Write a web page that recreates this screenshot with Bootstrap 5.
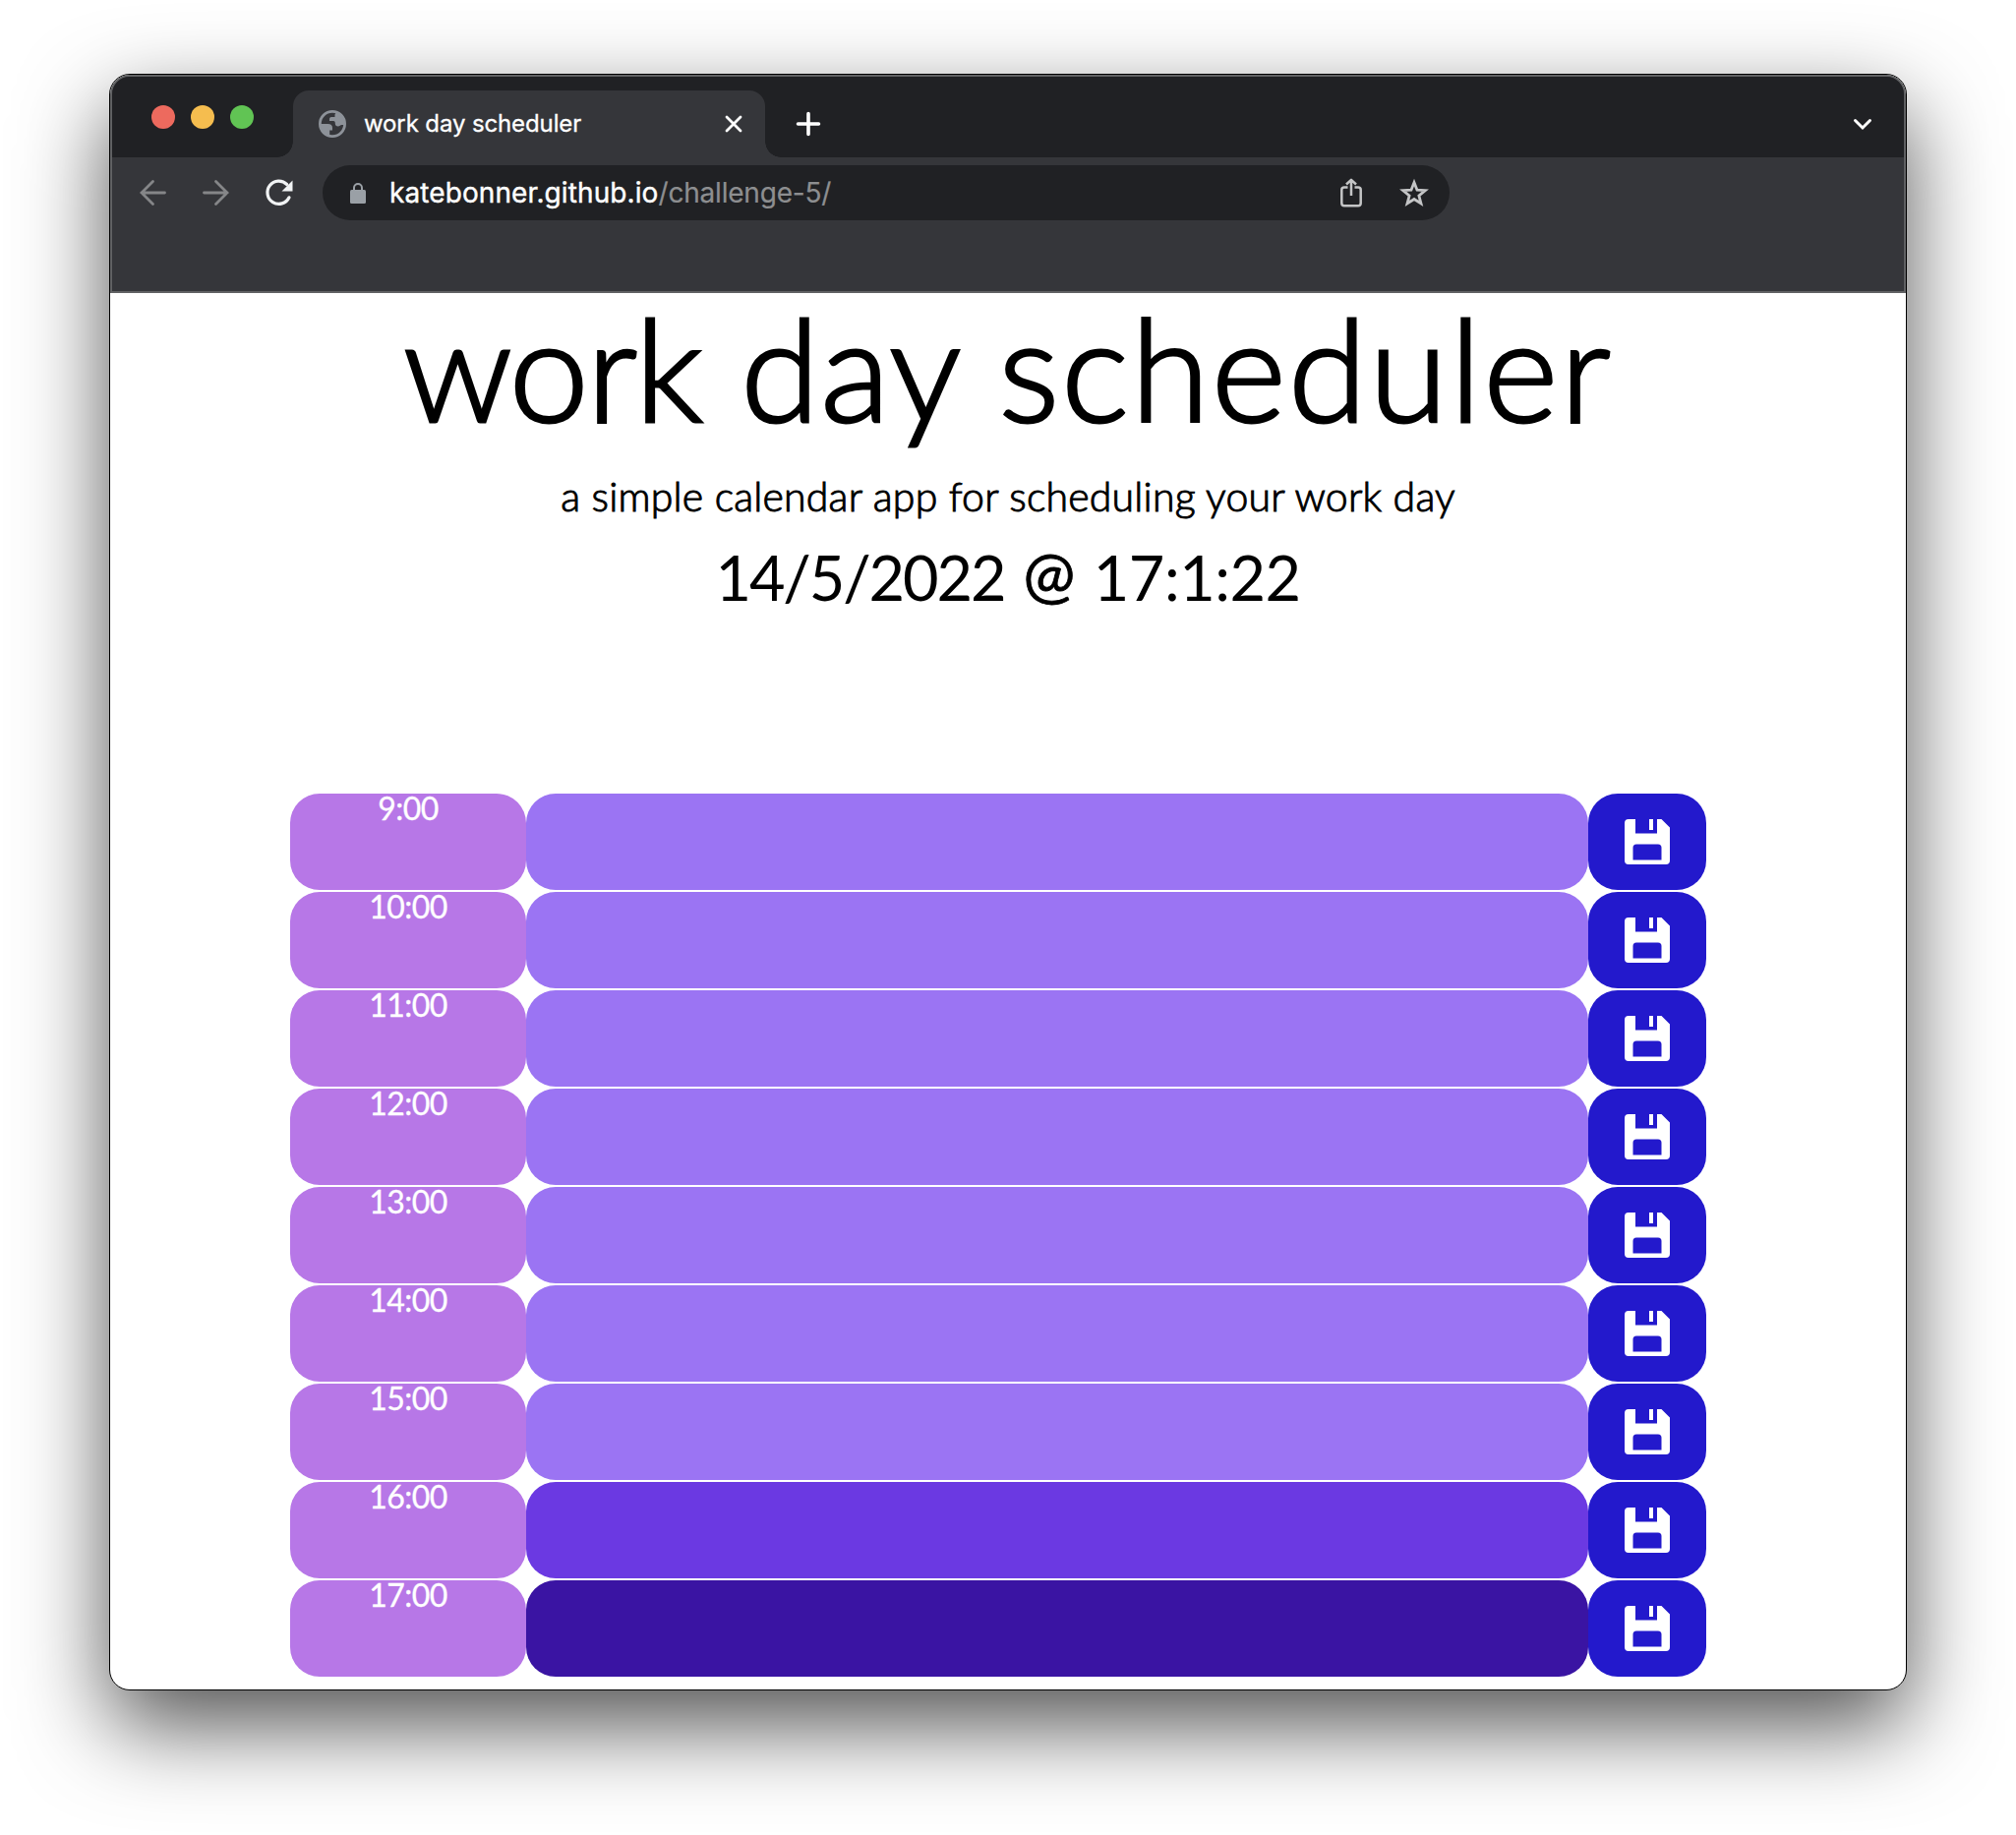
<!DOCTYPE html>
<html lang="en">
<head>
<meta charset="utf-8">
<meta name="viewport" content="width=device-width, initial-scale=1">
<title>work day scheduler</title>
<link href="https://cdn.jsdelivr.net/npm/bootstrap@5.3.0/dist/css/bootstrap.min.css" rel="stylesheet">
<style>
  body { background: #fff; font-family: Lato, "Open Sans", sans-serif; color: #000; }
  .desktop { width: 2050px; height: 1866px; padding: 75px 111px 0; }
  .browser { width: 1828px; height: 1644px; border: 1px solid #000; border-radius: 21px; background: #fff;
    box-shadow: 0 36px 90px rgba(0,0,0,.68); }
  .chrome { border: 2px solid #606163; border-radius: 20px 20px 0 0; background: #35363a; height: 222px;
    font-family: Inter, "Liberation Sans", sans-serif; }
  .tabstrip { height: 82px; background: #202124; border-radius: 18px 18px 0 0; padding-left: 40px; }
  .lights { gap: 16px; margin-top: -1px; height: 84px; }
  .light { width: 24px; height: 24px; border-radius: 50%; }
  .light-r { background: #ed6a5e; } .light-y { background: #f5bd4f; } .light-g { background: #61c454; }
  .page-tab { width: 480px; height: 68px; margin-left: 40px; background: #35363a; border-radius: 16px 16px 0 0;
    padding: 0 24px 0 26px; color: #fff; font-size: 24px; font-weight: 400; position: relative; }
  .page-tab::before, .page-tab::after { content: ""; position: absolute; bottom: 0; width: 16px; height: 16px; }
  .page-tab::before { left: -16px; background: radial-gradient(circle at 0 0, #202124 15.5px, #35363a 16px); }
  .page-tab::after { right: -16px; background: radial-gradient(circle at 100% 0, #202124 15.5px, #35363a 16px); }
  .tab-title { margin-left: 18px; letter-spacing: -.12px; -webkit-text-stroke: .3px #fff; }
  .tab-actions { height: 68px; padding: 0 33px 0 32px; }
  .toolbar { height: 56px; margin-top: 8px; padding-left: 28px; }
  .nav-icon { margin-left: 37px; }
  .pill { width: 1146px; height: 56px; border-radius: 28px; background: #202124; margin-left: 30px; padding: 0 21px 0 28px; }
  .url { margin-left: 24px; font-size: 28px; font-weight: 400; color: #fff; letter-spacing: .1px; -webkit-text-stroke: .4px #fff; }
  .url span { color: #8d8e90; -webkit-text-stroke: .2px #8d8e90; letter-spacing: -.2px; }
  .star { margin-left: 38px; }
  svg { display: block; flex: none; overflow: visible; }
  .title-line { font-size: 145px; line-height: 150px; font-weight: 300; letter-spacing: 1.2px; margin: 0; -webkit-text-stroke: 3px #000; }
  .word-tight { letter-spacing: -2.1px; } .word-wide { letter-spacing: 2.3px; }
  .sub-line { font-size: 41px; line-height: 52px; font-weight: 300; letter-spacing: .2px; margin: 31px 0 0; -webkit-text-stroke: 1px #000; }
  .date-line { font-size: 63px; line-height: 80px; font-weight: 400; letter-spacing: -.5px; word-spacing: 3.5px; margin: 16px 0 0; }
  .date-part { letter-spacing: -2.1px; }
  .at-sign { position: relative; top: -4px; -webkit-text-stroke: .8px #000; }
  .nowrap { white-space: nowrap; }
  .planner { width: 1440px; margin: 179px 0 0 183px; }
  .slot { height: 100px; padding: 1px 0; }
  .slot > div { border-radius: 30px; }
  .hour { background: #b777e7; color: #fff; font-size: 32px; line-height: 29px; letter-spacing: -.5px; -webkit-text-stroke: .3px #fff; }
  .past { background: #9b74f3; } .present { background: #6b39e2; } .future { background: #3a14a3; }
  .save { background: #2319cc; }
</style>
</head>
<body>
<svg width="0" height="0" class="position-absolute">
  <symbol id="floppy" viewBox="0 0 46 46">
    <path fill="#fff" fill-rule="evenodd" d="M4 0H11V14.500H33V0H37.500L46 8.500V42Q46 46 42 46H4Q0 46 0 42V4Q0 0 4 0ZM12 25.500Q8.500 25.500 8.500 29V41.500H37.500V29Q37.500 25.500 34 25.500Z"/>
    <path fill="#fff" d="M25 0H29V11H25Z"/>
  </symbol>
</svg>
<div class="desktop">
  <main class="browser">
    <header class="chrome">
      <div class="tabstrip d-flex align-items-end">
        <div class="lights d-flex align-items-center align-self-start">
          <span class="light light-r"></span><span class="light light-y"></span><span class="light light-g"></span>
        </div>
        <div class="page-tab d-flex align-items-center">
          <svg width="28" height="28" viewBox="0 0 28 28">
            <circle cx="14" cy="14" r="12.600" fill="#35363a" stroke="#8d9299" stroke-width="2.800"/>
            <path fill="#8d9299" d="M2 14H9.500C12.500 14 14 15.500 14 18V20.500H11.200V26C6 25 2 20 2 14Z"/>
            <path fill="#8d9299" d="M18 2L16.500 4.500V7H13C11.500 7 11 8 11 9.500V11H15C16.500 11 16.800 12 16.800 13.500C16.800 15.500 18 16.500 19.800 16.500C21.500 16.500 22 15 23.500 15H26C27 9 23.500 3.500 18 2Z"/>
          </svg>
          <span class="tab-title nowrap">work day scheduler</span>
          <svg class="ms-auto" width="16" height="16" viewBox="0 0 16 16"><path d="M1 1L15 15M15 1L1 15" stroke="#fff" stroke-width="2.800" stroke-linecap="round"/></svg>
        </div>
        <div class="tab-actions d-flex flex-grow-1 align-items-center">
          <svg width="24" height="24" viewBox="0 0 24 24"><path d="M12 1.500V22.500M1.500 12H22.500" stroke="#fff" stroke-width="3.600" stroke-linecap="round"/></svg>
          <svg class="ms-auto" width="18" height="11" viewBox="0 0 18 11"><path d="M1.500 1.500L9 9L16.500 1.500" fill="none" stroke="#fff" stroke-width="3" stroke-linecap="round"/></svg>
        </div>
      </div>
      <div class="toolbar d-flex align-items-center">
        <svg width="27" height="26" viewBox="0 0 27 26"><path d="M25.500 13H2M13.500 1.500L2 13L13.500 24.500" fill="none" stroke="#858688" stroke-width="2.800" stroke-linecap="round"/></svg>
        <svg class="nav-icon" width="27" height="26" viewBox="0 0 27 26"><path d="M1.500 13H25M13.500 1.500L25 13L13.500 24.500" fill="none" stroke="#858688" stroke-width="2.800" stroke-linecap="round"/></svg>
        <svg class="nav-icon" width="28" height="27" viewBox="0 0 28 27"><path d="M21.700 4.500A11.600 11.600 0 1 0 24 17.800" fill="none" stroke="#f1f3f4" stroke-width="3.200" stroke-linecap="round"/><path d="M27.500 .5V11.500H16.500Z" fill="#f1f3f4"/></svg>
        <div class="pill d-flex align-items-center">
          <svg width="16" height="21" viewBox="0 0 16 21"><rect x="0" y="7" width="16" height="14" rx="1.500" fill="#9aa0a6"/><path d="M4 8V5A4 4 0 0 1 12 5V8" fill="none" stroke="#9aa0a6" stroke-width="2"/></svg>
          <div class="url nowrap">katebonner.github.io<span>/challenge-5/</span></div>
          <svg class="ms-auto" width="22" height="30" viewBox="0 0 22 30"><path d="M7.500 9.500H4Q1.300 9.500 1.300 12V25.500Q1.300 28.300 4 28.300H18Q20.700 28.300 20.700 25.500V12Q20.700 9.500 18 9.500H14.500M11 18V2.500M6 6.500L11 1.800L16 6.500" fill="none" stroke="#c4c5c6" stroke-width="2.500" stroke-linejoin="round"/></svg>
          <svg class="star" width="30" height="29" viewBox="0 0 30 29"><path d="M15 3.500L18 11.200L26.300 11.700L19.900 17L22 25L15 20.500L8 25L10.100 17L3.700 11.700L12 11.200Z" fill="none" stroke="#c4c5c6" stroke-width="2.800"/></svg>
        </div>
      </div>
    </header>

    <section class="text-center">
      <h1 class="title-line nowrap"><span class="word-tight">work</span> day <span class="word-wide">scheduler</span></h1>
      <p class="sub-line nowrap">a simple calendar app for scheduling your work day</p>
      <p class="date-line nowrap"><span class="date-part">14/5/2022</span> <span class="at-sign">@</span> 17:1:22</p>
    </section>

    <section class="planner">
      <div class="slot row g-0"><div class="col-2 hour text-center">9:00</div><div class="col-9 past"></div><div class="col-1 save d-flex align-items-center justify-content-center"><svg width="46" height="46"><use href="#floppy"/></svg></div></div>
      <div class="slot row g-0"><div class="col-2 hour text-center">10:00</div><div class="col-9 past"></div><div class="col-1 save d-flex align-items-center justify-content-center"><svg width="46" height="46"><use href="#floppy"/></svg></div></div>
      <div class="slot row g-0"><div class="col-2 hour text-center">11:00</div><div class="col-9 past"></div><div class="col-1 save d-flex align-items-center justify-content-center"><svg width="46" height="46"><use href="#floppy"/></svg></div></div>
      <div class="slot row g-0"><div class="col-2 hour text-center">12:00</div><div class="col-9 past"></div><div class="col-1 save d-flex align-items-center justify-content-center"><svg width="46" height="46"><use href="#floppy"/></svg></div></div>
      <div class="slot row g-0"><div class="col-2 hour text-center">13:00</div><div class="col-9 past"></div><div class="col-1 save d-flex align-items-center justify-content-center"><svg width="46" height="46"><use href="#floppy"/></svg></div></div>
      <div class="slot row g-0"><div class="col-2 hour text-center">14:00</div><div class="col-9 past"></div><div class="col-1 save d-flex align-items-center justify-content-center"><svg width="46" height="46"><use href="#floppy"/></svg></div></div>
      <div class="slot row g-0"><div class="col-2 hour text-center">15:00</div><div class="col-9 past"></div><div class="col-1 save d-flex align-items-center justify-content-center"><svg width="46" height="46"><use href="#floppy"/></svg></div></div>
      <div class="slot row g-0"><div class="col-2 hour text-center">16:00</div><div class="col-9 present"></div><div class="col-1 save d-flex align-items-center justify-content-center"><svg width="46" height="46"><use href="#floppy"/></svg></div></div>
      <div class="slot row g-0"><div class="col-2 hour text-center">17:00</div><div class="col-9 future"></div><div class="col-1 save d-flex align-items-center justify-content-center"><svg width="46" height="46"><use href="#floppy"/></svg></div></div>
    </section>
  </main>
</div>
<script src="https://cdn.jsdelivr.net/npm/bootstrap@5.3.0/dist/js/bootstrap.bundle.min.js"></script>
</body>
</html>
